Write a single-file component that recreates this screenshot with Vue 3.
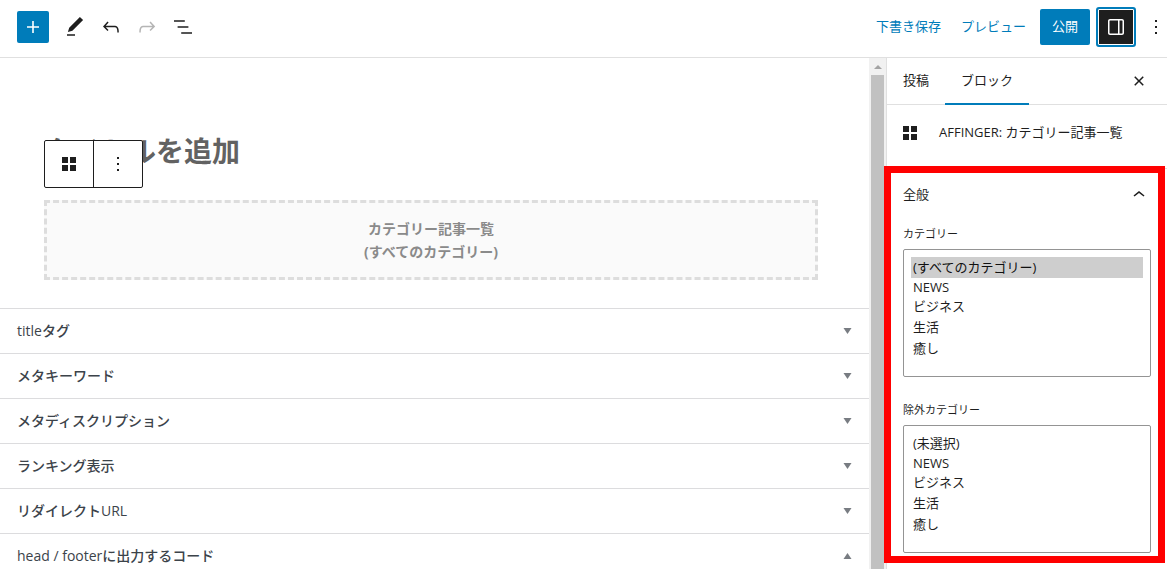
<script setup>
import { ref } from 'vue'

const icons = {
  plus: 'M18 11.2h-5.2V6h-1.6v5.2H6v1.6h5.2V18h1.6v-5.2H18z',
  edit: 'M20.1 5.1L16.9 2 6.2 12.7l-1.3 4.4 4.5-1.3L20.1 5.1zM4 20.8h8v-1.5H4v1.5z',
  undo: 'M18.3 11.7c-.6-.6-1.4-.9-2.3-.9H6.7l2.9-3.3-1.1-1-4.5 5L8.5 16l1-1-2.7-2.7H16c.5 0 .9.2 1.3.5 1 1 1 3.4 1 4.5v.3h1.5v-.2c0-1.5 0-4.3-1.5-5.7z',
  redo: 'M15.6 6.5l-1.1 1 2.9 3.3H8c-.9 0-1.7.3-2.3.9-1.4 1.5-1.4 4.2-1.4 5.6v.2h1.5v-.3c0-1.1 0-3.5 1-4.5.3-.3.7-.5 1.3-.5h9.2L14.5 15l1.1 1.1 4.6-4.6-4.6-5z',
  list: 'M13.8 5.2H3v1.5h10.8V5.2zm-3.6 12v1.5H21v-1.5H10.2zm7.2-6H6.6v1.5h10.8v-1.5z',
  drawer: 'M18 4H6c-1.1 0-2 .9-2 2v12c0 1.1.9 2 2 2h12c1.1 0 2-.9 2-2V6c0-1.1-.9-2-2-2zm-4 14.5H6c-.3 0-.5-.2-.5-.5V6c0-.3.2-.5.5-.5h8v13zm4.5-.5c0 .3-.2.5-.5.5h-2.5v-13H18c.3 0 .5.2.5.5v12z',
  more: 'M13 19h-2v-2h2v2zm0-6h-2v-2h2v2zm0-6h-2V5h2v2z',
  close: 'M12 13.06l3.712 3.713 1.061-1.06L13.061 12l3.712-3.712-1.06-1.06L12 10.938 8.288 7.227l-1.061 1.06L10.939 12l-3.712 3.712 1.06 1.061L12 13.061z',
  chevron: 'M6.5 12.4L12 8l5.5 4.4-.9 1.2L12 10l-4.5 3.6-1-1.2z',
  grid: 'M5 5h6v6H5zM13 5h6v6h-6zM5 13h6v6H5zM13 13h6v6h-6z',
}

const tools = [
  { name: 'edit', label: 'ツール' },
  { name: 'undo', label: '元に戻す' },
  { name: 'redo', label: 'やり直す', disabled: true },
  { name: 'list', label: 'リスト表示' },
]

const metaBoxes = ref([
  { title: 'titleタグ', open: false },
  { title: 'メタキーワード', open: false },
  { title: 'メタディスクリプション', open: false },
  { title: 'ランキング表示', open: false },
  { title: 'リダイレクトURL', open: false },
  { title: 'head / footerに出力するコード', open: true },
])

const categories = ['NEWS', 'ビジネス', '生活', '癒し']
const isLatin = (text) => /^[A-Z]+$/.test(text)

const title = ref('')
const included = ref(['(すべてのカテゴリー)'])
const excluded = ref([])
const fields = [
  { id: 'included', label: 'カテゴリー', model: included, options: ['(すべてのカテゴリー)', ...categories] },
  { id: 'excluded', label: '除外カテゴリー', model: excluded, options: ['(未選択)', ...categories] },
]
</script>

<template>
  <div class="editor">
    <header class="topbar">
      <button class="inserter" aria-label="ブロックを追加">
        <svg class="icon" viewBox="0 0 24 24"><path :d="icons.plus" /></svg>
      </button>
      <button v-for="t in tools" :key="t.name" class="tool" :disabled="t.disabled" :aria-label="t.label">
        <svg class="icon" viewBox="0 0 24 24"><path :d="icons[t.name]" /></svg>
      </button>
      <div class="actions">
        <button class="text-action">下書き保存</button>
        <button class="text-action">プレビュー</button>
        <button class="publish">公開</button>
        <button class="settings" aria-label="設定" aria-pressed="true">
          <svg class="icon" viewBox="0 0 24 24"><path :d="icons.drawer" /></svg>
        </button>
        <button class="options" aria-label="オプション">
          <svg class="icon" viewBox="0 0 24 24"><path :d="icons.more" /></svg>
        </button>
      </div>
    </header>

    <div class="body">
      <main class="content">
        <section class="canvas">
          <input v-model="title" class="title" type="text" placeholder="タイトルを追加" aria-label="タイトルを追加" />
          <div class="block-toolbar">
            <button aria-label="ブロック"><svg class="icon" viewBox="0 0 24 24"><path :d="icons.grid" /></svg></button>
            <button aria-label="オプション"><svg class="icon" viewBox="0 0 24 24"><path :d="icons.more" /></svg></button>
          </div>
          <div class="placeholder">
            <p>カテゴリー記事一覧</p>
            <p>(すべてのカテゴリー)</p>
          </div>
        </section>
        <button
          v-for="box in metaBoxes"
          :key="box.title"
          class="meta"
          :aria-expanded="box.open"
          @click="box.open = !box.open"
        >
          <span>{{ box.title }}</span>
          <svg class="arrow" :class="{ up: box.open }" viewBox="0 0 8 6"><path d="M0 0h8L4 6z" /></svg>
        </button>
      </main>

      <div class="scrollbar" aria-hidden="true">
        <svg class="scroll-arrow" viewBox="0 0 8 4"><path d="M4 0l4 4H0z" /></svg>
        <div class="thumb"></div>
      </div>

      <aside class="sidebar">
        <nav class="tabs">
          <button class="tab">投稿</button>
          <button class="tab active">ブロック</button>
          <button class="close" aria-label="設定を閉じる">
            <svg class="icon" viewBox="0 0 24 24"><path :d="icons.close" /></svg>
          </button>
        </nav>
        <div class="card">
          <svg class="icon" viewBox="0 0 24 24"><path :d="icons.grid" /></svg>
          <span class="lifted">AFFINGER: カテゴリー記事一覧</span>
        </div>
        <section class="panel">
          <button class="panel-head" aria-expanded="true">
            <span class="lifted">全般</span>
            <svg class="icon" viewBox="0 0 24 24"><path :d="icons.chevron" /></svg>
          </button>
          <div v-for="f in fields" :key="f.id" class="field">
            <label :for="f.id">{{ f.label }}</label>
            <select :id="f.id" v-model="f.model.value" multiple>
              <option v-for="o in f.options" :key="o" :value="o" :class="{ latin: isLatin(o) }">{{ o }}</option>
            </select>
          </div>
          <div class="highlight"></div>
        </section>
      </aside>
    </div>
  </div>
</template>

<style>
body {
  margin: 0;
  background: #fff;
}
</style>

<style scoped>
.editor {
  display: flex;
  flex-direction: column;
  height: 100vh;
  overflow: hidden;
  background: #fff;
  color: #1e1e1e;
  font: 13px/20px "Open Sans", "Noto Sans CJK JP", sans-serif;
}
.editor * {
  box-sizing: border-box;
}
button {
  display: flex;
  align-items: center;
  justify-content: center;
  margin: 0;
  padding: 0;
  border: 0;
  background: none;
  color: inherit;
  font: inherit;
  white-space: nowrap;
}
.icon {
  flex: none;
  width: 24px;
  height: 24px;
  fill: currentColor;
}
.lifted {
  padding-bottom: 2px;
}

.topbar {
  display: flex;
  flex: none;
  align-items: center;
  height: 58px;
  padding: 0 0 4px 17px;
  border-bottom: 1px solid #e0e0e0;
}
.inserter {
  width: 32px;
  height: 32px;
  margin-right: 8px;
  border-radius: 2px;
  background: #007cba;
  color: #fff;
}
.tool {
  width: 36px;
  height: 36px;
}
.tool:disabled {
  color: #b5b5b5;
}
.actions {
  display: flex;
  align-items: center;
  margin-left: auto;
}
.text-action {
  height: 36px;
  margin-right: 20px;
  padding-bottom: 2px;
  color: #007cba;
}
.text-action + .publish {
  margin-left: -6px;
}
.publish {
  height: 36px;
  margin-right: 6px;
  padding: 0 12px 2px;
  border-radius: 2px;
  background: #007cba;
  color: #fff;
}
.settings {
  width: 40px;
  height: 40px;
  border: 2px solid #007cba;
  border-radius: 3px;
  background: #1e1e1e;
  box-shadow: inset 0 0 0 1px #fff;
  color: #fff;
}
.options {
  width: 24px;
  height: 36px;
  margin-left: 8px;
  margin-right: -1px;
}

.body {
  display: flex;
  flex: 1;
  min-height: 0;
}
.content {
  flex: 1;
  min-width: 0;
  overflow: hidden;
}
.canvas {
  position: relative;
  padding: 72px 51px 28px 44px;
}
.title {
  display: block;
  width: 100%;
  height: 42px;
  margin-bottom: 28px;
  padding: 0;
  border: 0;
  outline: 0;
  background: none;
  font: bold 28px/42px "Open Sans", "Noto Sans CJK JP", sans-serif;
}
.title::placeholder {
  color: #626262;
  opacity: 1;
}
.block-toolbar {
  position: absolute;
  top: 82px;
  left: 44px;
  display: flex;
  border: 1px solid #1e1e1e;
  border-radius: 2px;
  background: #fff;
}
.block-toolbar button {
  width: 48px;
  height: 46px;
}
.block-toolbar button + button {
  width: 49px;
  border-left: 1px solid #1e1e1e;
}
.placeholder {
  padding: 14px;
  border: 3px dashed #ddd;
  background: #fafafa;
  color: #8a8a8a;
  font-size: 14px;
  font-weight: bold;
  line-height: 23px;
  text-align: center;
}
.placeholder p {
  margin: 0;
}
.meta {
  justify-content: space-between;
  width: 100%;
  height: 45px;
  padding: 0 17px;
  border-top: 1px solid #dcdcde;
  color: #3c434a;
  font-size: 14px;
  font-weight: 500;
}
.arrow {
  width: 9px;
  height: 6px;
  fill: #787c82;
}
.arrow.up {
  transform: rotate(180deg);
}

.scrollbar {
  display: flex;
  flex: none;
  flex-direction: column;
  align-items: center;
  width: 17px;
  background: #f1f1f1;
}
.scroll-arrow {
  width: 8px;
  height: 4px;
  margin: 7px 0 6px;
  fill: #a3a3a3;
}
.thumb {
  flex: 1;
  width: 13px;
  background: #c1c1c1;
}

.sidebar {
  flex: none;
  width: 281px;
  border-left: 1px solid #e0e0e0;
}
.tabs {
  display: flex;
  height: 47px;
  border-bottom: 1px solid #e0e0e0;
}
.tab {
  height: 47px;
  padding: 0 16px 4px;
}
.tab.active {
  box-shadow: inset 0 -2px #007cba;
}
.close {
  width: 24px;
  margin: 0 16px 0 auto;
}
.card {
  display: flex;
  align-items: center;
  gap: 17px;
  height: 63px;
  padding: 0 11px 8px;
}
.panel {
  position: relative;
  padding: 0 16px;
  border-top: 1px solid #e0e0e0;
}
.panel-head {
  justify-content: space-between;
  width: 100%;
  height: 52px;
}
.field {
  padding-bottom: 20px;
}
.field label {
  display: block;
  margin-bottom: 2px;
  font-size: 11px;
  line-height: 26px;
}
.field select {
  display: block;
  width: 100%;
  height: 128px;
  padding: 7px;
  overflow: hidden;
  border: 1px solid #949494;
  border-radius: 2px;
  outline: 0;
  background: #fff;
  color: #1e1e1e;
  font: inherit;
}
.field option {
  height: 21px;
  min-height: 0;
  padding: 0 2px;
  line-height: 18px;
}
.field option.latin {
  height: 18px;
}
.highlight {
  position: absolute;
  top: -3px;
  right: 2px;
  bottom: 10px;
  left: -3px;
  border: 7px solid #f00;
  pointer-events: none;
}
</style>
